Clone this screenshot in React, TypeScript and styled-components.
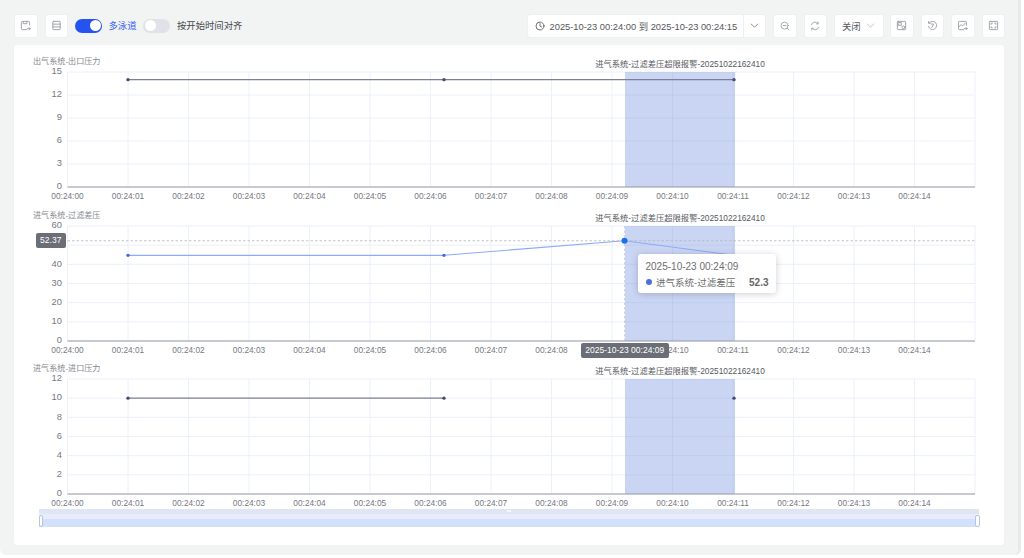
import React from 'react';
import styled, { createGlobalStyle } from 'styled-components';

const FONT = '"Liberation Sans", "Noto Sans CJK SC", "Noto Sans", sans-serif';

const Global = createGlobalStyle`
  html, body { margin: 0; padding: 0; background: #ffffff; overflow: hidden; }
  body { font-family: ${FONT}; }
`;

const Page = styled.div`
  width: 1021px;
  height: 555px;
  box-sizing: border-box;
  background: #f2f3f3;
  border-right: 3px solid #e8e9e9;
  border-radius: 0 0 6px 6px;
  padding: 13px 13px 0 14px;
  display: flex;
  flex-direction: column;
  gap: 7px;
`;

const Toolbar = styled.div`
  height: 25px;
  display: flex;
  align-items: center;
  justify-content: space-between;
`;

const ToolGroup = styled.div`
  display: flex;
  align-items: center;
`;

const IconButton = styled.button<{ $gap?: number }>`
  width: 23.5px;
  height: 24px;
  padding: 0;
  margin-left: ${(p) => p.$gap ?? 0}px;
  background: #fff;
  border: 1px solid #edeff1;
  border-radius: 3px;
  display: flex;
  align-items: center;
  justify-content: center;
  color: #989ca2;
`;

const Toggle = styled.div<{ $on?: boolean; $gap: number }>`
  width: 27px;
  height: 14px;
  margin-left: ${(p) => p.$gap}px;
  border-radius: 7px;
  background: ${(p) => (p.$on ? '#2453f0' : '#dfe2e8')};
  position: relative;
  &::after {
    content: '';
    position: absolute;
    top: 1.5px;
    left: ${(p) => (p.$on ? '14.5px' : '1.5px')};
    width: 11px;
    height: 11px;
    border-radius: 50%;
    background: #fff;
  }
`;

const ToggleLabel = styled.span<{ $on?: boolean }>`
  margin-left: 6.5px;
  font-size: 9.33px;
  line-height: 14px;
  color: ${(p) => (p.$on ? '#3a62ee' : '#44474d')};
  white-space: nowrap;
`;

const DateRange = styled.div`
  width: 239px;
  height: 24px;
  box-sizing: border-box;
  background: #fff;
  border: 1px solid #edeff1;
  border-radius: 3px;
  display: flex;
  align-items: center;
  color: #55585e;
`;

const DateText = styled.div`
  flex: 1;
  display: flex;
  align-items: center;
  gap: 4.5px;
  padding-left: 7px;
  font-size: 9.33px;
  white-space: nowrap;
`;

const DateDrop = styled.div`
  width: 21px;
  height: 100%;
  border-left: 1px solid #edeff1;
  display: flex;
  align-items: center;
  justify-content: center;
  color: #6f747b;
`;

const SelectBox = styled.div`
  width: 50px;
  height: 24px;
  margin-left: 7px;
  box-sizing: border-box;
  background: #fff;
  border: 1px solid #edeff1;
  border-radius: 3px;
  display: flex;
  align-items: center;
  justify-content: space-between;
  padding: 0 8px 0 7px;
  font-size: 9.33px;
  color: #55585e;
`;

const SelectArrow = styled.span`
  display: flex;
  color: #b5b8bd;
`;

const Card = styled.div`
  width: 990px;
  height: 500px;
  box-sizing: border-box;
  background: #fff;
  border-radius: 3px;
  padding-top: 11px;
  box-shadow: 0 0 1px rgba(0, 0, 0, 0.06);
`;

const ChartWrap = styled.div`
  height: 153.5px;
  position: relative;
  svg { display: block; overflow: visible; }
`;

const AxisPointerLabel = styled.div`
  position: absolute;
  left: 22px;
  top: 23.5px;
  width: 29.5px;
  height: 14.5px;
  background: #6b6e76;
  border-radius: 2px;
  color: #fff;
  font-size: 8.5px;
  line-height: 14.5px;
  text-align: center;
`;

const TimePointerLabel = styled.div`
  position: absolute;
  left: 566.5px;
  top: 133px;
  width: 88.5px;
  height: 15px;
  background: #6b6e76;
  border-radius: 2px;
  color: #fff;
  font-size: 8.5px;
  line-height: 15px;
  text-align: center;
  white-space: nowrap;
`;

const Tooltip = styled.div`
  position: absolute;
  left: 624px;
  top: 44.5px;
  width: 138px;
  height: 39px;
  box-sizing: border-box;
  padding: 5.5px 7.5px;
  background: #fff;
  border-radius: 3px;
  box-shadow: 0 1px 7px rgba(0, 0, 0, 0.2);
  font-size: 10px;
  color: #6e6e6e;
`;

const TooltipTitle = styled.div`
  line-height: 13px;
  white-space: nowrap;
`;

const TooltipRow = styled.div`
  display: flex;
  align-items: center;
  line-height: 13px;
  margin-top: 3px;
  white-space: nowrap;
  font-size: 9.5px;
`;

const TooltipDot = styled.i`
  width: 6.5px;
  height: 6.5px;
  border-radius: 50%;
  background: #4a6fe0;
  margin-right: 4px;
  flex: none;
`;

const TooltipValue = styled.b`
  margin-left: auto;
  font-size: 10px;
  font-weight: 700;
  color: #666;
`;

const ZoomBar = styled.div`
  position: relative;
  margin: -7.5px 0 0 25px;
  width: 940px;
  height: 17.5px;
  display: grid;
  grid-template-rows: 4.5px 5.5px 1fr;
`;

const ZoomRow = styled.div<{ $c: string }>`
  background: ${(p) => p.$c};
`;

const ZoomHandle = styled.div<{ $side: 'left' | 'right' }>`
  position: absolute;
  top: 6px;
  ${(p) => p.$side}: -0.5px;
  width: 2.5px;
  height: 9.5px;
  background: #fff;
  border: 0.7px solid #b8c4d8;
  border-radius: 2px;
`;

const ZoomGrip = styled.div`
  position: absolute;
  left: 468px;
  top: 1px;
  width: 4px;
  height: 2px;
  background: #f4f6fb;
`;

const STROKE = { fill: 'none', stroke: 'currentColor', strokeWidth: 1, strokeLinecap: 'round', strokeLinejoin: 'round' } as const;

const Icon: React.FC<{ children: React.ReactNode; size?: number }> = ({ children, size = 11 }) => (
  <svg width={size} height={size} viewBox="0 0 12 12" {...STROKE}>{children}</svg>
);

const SaveIcon = () => (
  <Icon>
    <path d="M10.5 5.5V2.5q0-1-1-1h-7q-1 0-1 1v7q0 1 1 1h5" />
    <path d="M3.5 1.5v2.5h4V1.5" />
    <path d="M8.2 9.5h3M10 8.2l1.3 1.3-1.3 1.3" />
  </Icon>
);
const TableIcon = () => (
  <Icon>
    <rect x="2" y="1.5" width="8" height="9" rx="0.6" />
    <path d="M2 4.5h8M2 7.5h8" />
  </Icon>
);
const ClockIcon = () => (
  <Icon size={10}>
    <circle cx="6" cy="6" r="4.8" />
    <path d="M6 3v3.2l2 1.1" />
  </Icon>
);
const Chevron = ({ size = 9 }: { size?: number }) => (
  <svg width={size} height={size} viewBox="0 0 10 10" fill="none" stroke="currentColor" strokeWidth="0.9">
    <path d="M1 3l4 4 4-4" />
  </svg>
);
const ZoomOutIcon = () => (
  <Icon size={10}>
    <circle cx="5.5" cy="5.5" r="4.2" />
    <path d="M8.6 8.6l2.2 2.2M3.8 5.5h3.4" />
  </Icon>
);
const RefreshIcon = () => (
  <Icon size={10}>
    <path d="M1.6 4.6A4.6 4.6 0 0 1 9.6 3.2M10.4 7.4A4.6 4.6 0 0 1 2.4 8.8" />
    <path d="M9.8 1.2v2.2H7.8M2.2 10.8V8.6h2" />
  </Icon>
);
const ScreenIcon = () => (
  <Icon>
    <rect x="1.5" y="1.5" width="9" height="9" rx="0.8" />
    <rect x="2.8" y="2.8" width="3" height="3" />
    <circle cx="8" cy="8" r="1.5" />
  </Icon>
);
const HistoryIcon = () => (
  <Icon>
    <path d="M2.4 3.2A4.5 4.5 0 1 1 1.6 7" />
    <path d="M1.6 1.6v2h2" />
    <path d="M4.8 4.4h2.4L5.4 8" />
  </Icon>
);
const ExportIcon = () => (
  <Icon>
    <path d="M10.2 6V2.4q0-.9-.9-.9H2.6q-.9 0-.9.9v7.2q0 .9.9.9h4.6" />
    <path d="M2 7.4l2.6-2.4 1.6 1.4 2.8-3" />
    <path d="M8 9.4h3M9.8 8.1l1.3 1.3-1.3 1.3" />
  </Icon>
);
const FullIcon = () => (
  <Icon>
    <rect x="1.5" y="1.5" width="9" height="9" rx="0.8" />
    <path d="M3.4 4.8V3.4h1.4M8.6 4.8V3.4H7.2M3.4 7.2v1.4h1.4M8.6 7.2v1.4H7.2" />
  </Icon>
);

/* plot coordinates, relative to the chart box */
const X0 = 53.5;
const SEC = 60.5;
const TOP = 16;
const H = 115;
const TICKS = Array.from({ length: 15 }, (_, i) => i);
const tick = (i: number) => `00:24:${String(i).padStart(2, '0')}`;
const P1 = X0 + SEC;
const P2 = 430;
const P3 = 610.5;
const P4 = 720;

type Series = { line: string; dot: string; width: number };

const ChartSvg: React.FC<{
  title: string;
  max: number;
  step: number;
  segments: [number, number, number, number][];
  dots: [number, number][];
  series: Series;
  coveredValues?: number[];
  coveredTicks?: number[];
  children?: React.ReactNode;
}> = ({ title, max, step, segments, dots, series, coveredValues = [], coveredTicks = [], children }) => {
  const y = (v: number) => TOP + H - (v / max) * H;
  const vals: number[] = [];
  for (let v = 0; v <= max; v += step) vals.push(v);
  const grid = '#e9eef8';
  const text = '#75797f';
  return (
    <svg width="990" height="153.5" fontFamily={FONT}>
      <text x="19" y="7.5" fontSize="8.1" fill="#85888e">{title}</text>
      <text x="666" y="10.5" fontSize="8.3" fill="#55585e" textAnchor="middle">进气系统-过滤差压超限报警-20251022162410</text>
      {vals.map((v) => (
        <line key={v} x1={X0} x2={961} y1={y(v)} y2={y(v)} stroke={grid} strokeWidth="0.9" />
      ))}
      {[...TICKS, 15].map((i) => (
        <line key={i} x1={X0 + i * SEC} x2={X0 + i * SEC} y1={TOP} y2={TOP + H} stroke={grid} strokeWidth="0.9" />
      ))}
      <rect x={P3 + 0.5} y={TOP} width={P4 - P3 + 0.5} height={H} fill="#7f9ae2" fillOpacity="0.42" />
      <line x1={X0} x2={961} y1={TOP + H} y2={TOP + H} stroke="#9a9ca3" strokeWidth="1" />
      {vals.filter((v) => !coveredValues.includes(v)).map((v) => (
        <text key={v} x="48" y={y(v) + 2.2} fontSize="9.33" fill={text} textAnchor="end">{v}</text>
      ))}
      {TICKS.filter((i) => !coveredTicks.includes(i)).map((i) => (
        <text key={i} x={X0 + i * SEC} y={TOP + H + 11.8} fontSize="8.3" fill={text} textAnchor="middle">{tick(i)}</text>
      ))}
      {segments.map(([a, va, b, vb], i) => (
        <line key={i} x1={a} y1={y(va)} x2={b} y2={y(vb)} stroke={series.line} strokeWidth={series.width} />
      ))}
      {dots.map(([a, v], i) => (
        <circle key={i} cx={a} cy={y(v)} r="1.7" fill={series.dot} />
      ))}
      {children}
    </svg>
  );
};

const dark: Series = { line: '#7c7f98', dot: '#474a72', width: 1.2 };
const blue: Series = { line: '#8fabf5', dot: '#3f6be0', width: 1.1 };

export default function App() {
  return (
    <>
      <Global />
      <Page>
        <Toolbar>
          <ToolGroup>
            <IconButton><SaveIcon /></IconButton>
            <IconButton $gap={7}><TableIcon /></IconButton>
            <Toggle $on $gap={7} />
            <ToggleLabel $on>多泳道</ToggleLabel>
            <Toggle $gap={7} />
            <ToggleLabel>按开始时间对齐</ToggleLabel>
          </ToolGroup>
          <ToolGroup>
            <DateRange>
              <DateText>
                <ClockIcon />
                <span>2025-10-23 00:24:00 到 2025-10-23 00:24:15</span>
              </DateText>
              <DateDrop><Chevron /></DateDrop>
            </DateRange>
            <IconButton $gap={7}><ZoomOutIcon /></IconButton>
            <IconButton $gap={7}><RefreshIcon /></IconButton>
            <SelectBox>
              <span>关闭</span>
              <SelectArrow><Chevron /></SelectArrow>
            </SelectBox>
            <IconButton $gap={6}><ScreenIcon /></IconButton>
            <IconButton $gap={7}><HistoryIcon /></IconButton>
            <IconButton $gap={7}><ExportIcon /></IconButton>
            <IconButton $gap={7}><FullIcon /></IconButton>
          </ToolGroup>
        </Toolbar>
        <Card>
          <ChartWrap>
            <ChartSvg
              title="出气系统-出口压力"
              max={15}
              step={3}
              series={dark}
              segments={[[P1, 14, P4, 14]]}
              dots={[[P1, 14], [P2, 14], [P4, 14]]}
            />
          </ChartWrap>
          <ChartWrap>
            <ChartSvg
              title="进气系统-过滤差压"
              max={60}
              step={10}
              series={blue}
              coveredValues={[50]}
              coveredTicks={[9]}
              segments={[[P1, 44.7, P2, 44.7], [P2, 44.7, P3, 52.3], [P3, 52.3, P4, 44.7]]}
              dots={[[P1, 44.7], [P2, 44.7]]}
            >
              <line x1={X0} x2={961} y1={TOP + H - (52.3 / 60) * H} y2={TOP + H - (52.3 / 60) * H} stroke="#b4b6bb" strokeWidth="0.8" strokeDasharray="2.5 2" />
              <line x1={P3} x2={P3} y1={TOP} y2={TOP + H} stroke="#c6c8cd" strokeWidth="0.8" strokeDasharray="2.5 2" />
              <circle cx={P3} cy={TOP + H - (52.3 / 60) * H} r="3" fill="#1a6ff0" />
            </ChartSvg>
            <AxisPointerLabel>52.37</AxisPointerLabel>
            <TimePointerLabel>2025-10-23 00:24:09</TimePointerLabel>
            <Tooltip>
              <TooltipTitle>2025-10-23 00:24:09</TooltipTitle>
              <TooltipRow>
                <TooltipDot />
                <span>进气系统-过滤差压</span>
                <TooltipValue>52.3</TooltipValue>
              </TooltipRow>
            </Tooltip>
          </ChartWrap>
          <ChartWrap>
            <ChartSvg
              title="进气系统-进口压力"
              max={12}
              step={2}
              series={dark}
              segments={[[P1, 10, P2, 10]]}
              dots={[[P1, 10], [P2, 10], [P4, 10]]}
            />
          </ChartWrap>
          <ZoomBar>
            <ZoomRow $c="#dfe5f3" />
            <ZoomRow $c="#e6ecfc" />
            <ZoomRow $c="#d2e0fc" />
            <ZoomGrip />
            <ZoomHandle $side="left" />
            <ZoomHandle $side="right" />
          </ZoomBar>
        </Card>
      </Page>
    </>
  );
}
